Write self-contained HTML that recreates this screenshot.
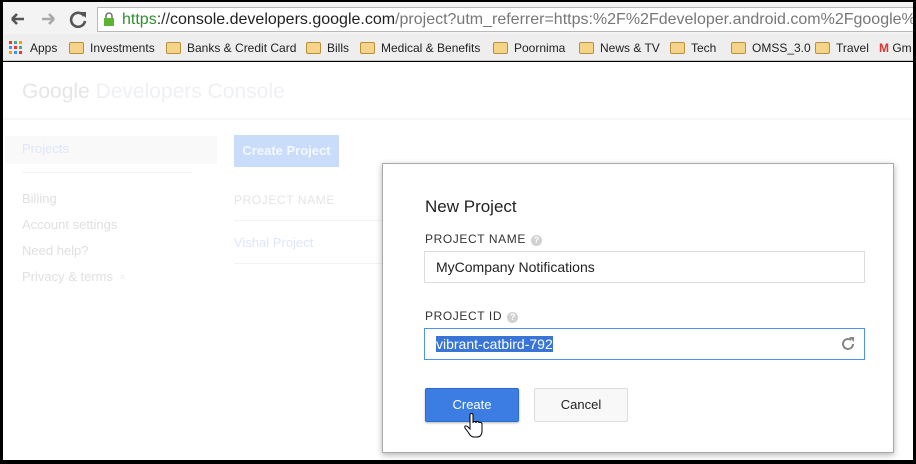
<!DOCTYPE html>
<html><head><style>
*{margin:0;padding:0;box-sizing:border-box}
body{width:916px;height:464px;background:#000;position:relative;overflow:hidden;font-family:"Liberation Sans",Arial,sans-serif}
.a{position:absolute}
.tb{left:3px;top:2px;width:910px;height:32px;background:#f3f3f3}
.bb{left:3px;top:34px;width:910px;height:27px;background:#eeeeee;border-bottom:1px solid #c8c8c8;font-size:12px;color:#222}
.page{left:3px;top:62px;width:910px;height:398px;background:#fff}
.url{left:97px;top:7px;width:816px;height:25px;background:#fff;border:1px solid #b9b9b9;border-right:none;font-size:16px;line-height:23px;color:#777;white-space:nowrap;overflow:hidden;padding-left:24px}
.fold{display:inline-block;width:15px;height:12px;background:#f5d48a;border:1px solid #b98f3c;border-radius:2px;vertical-align:-2px;margin-right:6px}
.bk{position:absolute;top:7px;white-space:nowrap}
.in{border:1px solid #dcdcdc;background:#fff;font-size:14px;color:#222;padding-left:11px;line-height:30px}
.lbl{font-size:12px;letter-spacing:.6px;color:#333}
.q{display:inline-block;width:11px;height:11px;border-radius:50%;background:#d0d0d0;color:#fff;font-size:9px;text-align:center;line-height:11px;font-weight:bold;vertical-align:0;margin-left:5px;letter-spacing:0}
</style></head><body>
<div class="a tb"></div>
<svg class="a" style="left:8px;top:10px" width="80" height="18"><path d="M4 9h12M4 9l5-5M4 9l5 5" stroke="#555" stroke-width="2.6" fill="none"/><path d="M34 9h12M46 9l-5-5M46 9l-5 5" stroke="#aaa" stroke-width="2.6" fill="none"/><path d="M76 6a7 7 0 1 0 1 5" stroke="#555" stroke-width="2.6" fill="none"/><path d="M72 2l6 0 0 6z" fill="#555"/></svg>
<div class="a url"><span style="color:#2f8d2f">https</span><span style="color:#333">://</span><span style="color:#222">console.developers.google.com</span>/project?utm_referrer=https:%2F%2Fdeveloper.android.com%2Fgoogle%2F</div>
<svg class="a" style="left:103px;top:12px" width="12" height="15"><rect x="1" y="6" width="10" height="8" fill="#5cb531"/><path d="M3 6V4a3 3 0 0 1 6 0v2" stroke="#777" stroke-width="1.6" fill="none"/></svg>
<div class="a bb">
<svg class="bk" style="left:6px;top:7px" width="13" height="13"><rect x="0" y="0" width="3" height="3" fill="#e33"/><rect x="5" y="0" width="3" height="3" fill="#4a8"/><rect x="10" y="0" width="3" height="3" fill="#f90"/><rect x="0" y="5" width="3" height="3" fill="#39f"/><rect x="5" y="5" width="3" height="3" fill="#e33"/><rect x="10" y="5" width="3" height="3" fill="#4a8"/><rect x="0" y="10" width="3" height="3" fill="#f90"/><rect x="5" y="10" width="3" height="3" fill="#39f"/><rect x="10" y="10" width="3" height="3" fill="#e33"/></svg>
<span class="bk" style="left:27px">Apps</span>
<span class="bk" style="left:66px"><i class="fold"></i>Investments</span>
<span class="bk" style="left:163px"><i class="fold"></i>Banks &amp; Credit Card</span>
<span class="bk" style="left:303px"><i class="fold"></i>Bills</span>
<span class="bk" style="left:357px"><i class="fold"></i>Medical &amp; Benefits</span>
<span class="bk" style="left:490px"><i class="fold"></i>Poornima</span>
<span class="bk" style="left:576px"><i class="fold"></i>News &amp; TV</span>
<span class="bk" style="left:667px"><i class="fold"></i>Tech</span>
<span class="bk" style="left:728px"><i class="fold"></i>OMSS_3.0</span>
<span class="bk" style="left:812px"><i class="fold"></i>Travel</span>
<span class="bk" style="left:876px;color:#d33;font-weight:bold">M <span style="color:#222;font-weight:normal">Gm</span></span>
</div>
<div class="a page"></div>
<div class="a" style="left:22px;top:80px;font-size:21px;color:#e6e6e6">Google <span style="color:#eef0f3">Developers Console</span></div>
<div class="a" style="left:3px;top:118px;width:910px;height:2px;background:#f7f7f7"></div>
<div class="a" style="left:5px;top:136px;width:212px;height:28px;background:#f9f9f9"></div>
<div class="a" style="left:22px;top:141px;font-size:13px;color:#dde6fa">Projects</div>
<div class="a" style="left:22px;top:172px;width:170px;height:1px;background:#f3f3f3"></div>
<div class="a" style="left:22px;top:186px;font-size:13px;color:#e0e0e0;line-height:26px">Billing<br>Account settings<br>Need help?<br>Privacy &amp; terms &nbsp;▫</div>
<div class="a" style="left:234px;top:135px;width:105px;height:32px;background:#c9dcf9;color:#f4f8ff;font-size:13px;font-weight:bold;text-align:center;line-height:32px">Create Project</div>
<div class="a" style="left:234px;top:193px;font-size:12px;color:#e4e4e4;letter-spacing:.6px">PROJECT NAME</div>
<div class="a" style="left:234px;top:220px;width:150px;height:1px;background:#f3f3f3"></div>
<div class="a" style="left:234px;top:235px;font-size:13px;color:#dde6fa">Vishal Project</div>
<div class="a" style="left:234px;top:263px;width:150px;height:1px;background:#f3f3f3"></div>
<div class="a" style="left:382px;top:163px;width:512px;height:290px;background:#fff;border:1px solid #aaa;box-shadow:0 2px 6px rgba(0,0,0,.3)"></div>
<div class="a" style="left:425px;top:197px;font-size:17px;color:#222">New Project</div>
<div class="a lbl" style="left:425px;top:232px">PROJECT NAME<span class="q">?</span></div>
<div class="a in" style="left:424px;top:251px;width:441px;height:32px">MyCompany Notifications</div>
<div class="a lbl" style="left:425px;top:309px">PROJECT ID<span class="q">?</span></div>
<div class="a in" style="left:424px;top:328px;width:441px;height:32px;border-color:#4d90fe;line-height:30px"><span style="background:#3875d7;color:#fff">vibrant-catbird-792</span></div>
<svg class="a" style="left:841px;top:337px" width="14" height="14"><path d="M12 7a5 5 0 1 1-2-4" stroke="#888" stroke-width="2" fill="none"/><path d="M8 0h5v5z" fill="#888"/></svg>
<div class="a" style="left:425px;top:388px;width:94px;height:34px;background:#3b7de3;border:1px solid #2f6bd0;border-radius:2px;color:#fff;font-size:13px;text-align:center;line-height:32px;box-shadow:0 1px 2px rgba(0,0,0,.3)">Create</div>
<div class="a" style="left:534px;top:388px;width:94px;height:34px;background:#f8f8f8;border:1px solid #ddd;border-radius:2px;color:#222;font-size:13px;text-align:center;line-height:32px">Cancel</div>
<svg class="a" style="left:464px;top:413px" width="20" height="26"><path d="M6 2c0-2 3-2 3 0v8c0-2 3-2 3 0 0-2 3-2 3 0 0-1 3-1 3 1v7c0 4-2 6-5 6h-3c-3 0-4-2-6-5l-3-4c-1-2 1-3 3-1l2 2z" fill="#fff" stroke="#000" stroke-width="1"/></svg>
</body></html>
